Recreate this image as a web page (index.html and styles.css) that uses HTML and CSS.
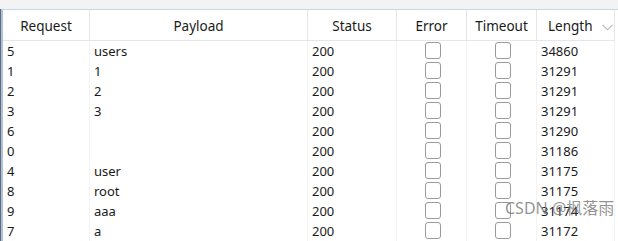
FILE: index.html
```html
<!DOCTYPE html>
<html>
<head>
<meta charset="utf-8">
<link rel="stylesheet" href="styles.css">
</head>
<body>
<div class="frame">
  <div class="grid">
    <div class="hd">Request</div>
    <div class="hd">Payload</div>
    <div class="hd">Status</div>
    <div class="hd">Error</div>
    <div class="hd">Timeout</div>
    <div class="hd sort">Length<svg class="chev" width="11" height="7" viewBox="0 0 11 7"><path d="M0.5 0.8 L5.5 5.8 L10.5 0.8" fill="none" stroke="#b5b5b5" stroke-width="1.1"/></svg></div>

    <div class="c">5</div><div class="c">users</div><div class="c">200</div><div class="c cb"><span class="box"></span></div><div class="c cb"><span class="box"></span></div><div class="c">34860</div>
    <div class="c">1</div><div class="c">1</div><div class="c">200</div><div class="c cb"><span class="box"></span></div><div class="c cb"><span class="box"></span></div><div class="c">31291</div>
    <div class="c">2</div><div class="c">2</div><div class="c">200</div><div class="c cb"><span class="box"></span></div><div class="c cb"><span class="box"></span></div><div class="c">31291</div>
    <div class="c">3</div><div class="c">3</div><div class="c">200</div><div class="c cb"><span class="box"></span></div><div class="c cb"><span class="box"></span></div><div class="c">31291</div>
    <div class="c">6</div><div class="c"></div><div class="c">200</div><div class="c cb"><span class="box"></span></div><div class="c cb"><span class="box"></span></div><div class="c">31290</div>
    <div class="c">0</div><div class="c"></div><div class="c">200</div><div class="c cb"><span class="box"></span></div><div class="c cb"><span class="box"></span></div><div class="c">31186</div>
    <div class="c">4</div><div class="c">user</div><div class="c">200</div><div class="c cb"><span class="box"></span></div><div class="c cb"><span class="box"></span></div><div class="c">31175</div>
    <div class="c">8</div><div class="c">root</div><div class="c">200</div><div class="c cb"><span class="box"></span></div><div class="c cb"><span class="box"></span></div><div class="c">31175</div>
    <div class="c">9</div><div class="c">aaa</div><div class="c">200</div><div class="c cb"><span class="box"></span></div><div class="c cb"><span class="box"></span></div><div class="c">31174</div>
    <div class="c">7</div><div class="c">a</div><div class="c">200</div><div class="c cb"><span class="box"></span></div><div class="c cb"><span class="box"></span></div><div class="c">31172</div>
  </div>
  <div class="wm">CSDN @枫落雨</div>
</div>
</body>
</html>
```
FILE: styles.css
```css
html, body {
  margin: 0;
  padding: 0;
  background: #f3f3f3;
  overflow: hidden;
}
body {
  padding-top: 9px;
  font-family: "Noto Sans", "Noto Sans CJK SC", sans-serif;
  font-size: 13px;
  color: #1a1a1a;
}
.frame {
  position: relative;
  margin-left: 1px;
  width: 615px;
  height: 232px;
  border-left: 2px solid #a9c1e2;
  border-top: 1px solid #c6d6ec;
  background: #fff;
  box-shadow: -1px 0 0 #6a6a6a;
}
.grid {
  display: grid;
  grid-template-columns: 87px 218px 89px 70px 70px 78px;
  grid-template-rows: 31px;
  grid-auto-rows: 20px;
}
.hd {
  display: flex;
  align-items: center;
  justify-content: center;
  border-right: 1px solid #e6e6e6;
  border-bottom: 1px solid #e6e6e6;
  padding-top: 3px;
  line-height: 1;
  font-size: 13.5px;
}
.sort {
  justify-content: flex-start;
  padding-left: 11px;
}
.chev {
  margin-left: 9px;
  margin-top: 1px;
}
.c {
  display: flex;
  align-items: center;
  padding-left: 4px;
  padding-top: 1px;
  border-right: 1px solid #f3f3f3;
  line-height: 1;
  white-space: nowrap;
}
.cb {
  justify-content: center;
  padding-left: 2px;
  padding-top: 0;
}
.box {
  width: 14px;
  height: 15px;
  border: 1px solid #9a9a9a;
  border-radius: 3px;
  background: #fff;
  margin-top: -2px;
}
.wm {
  position: absolute;
  left: 502px;
  top: 185px;
  font-size: 16px;
  color: rgba(110, 110, 110, 0.75);
  white-space: nowrap;
}
```
